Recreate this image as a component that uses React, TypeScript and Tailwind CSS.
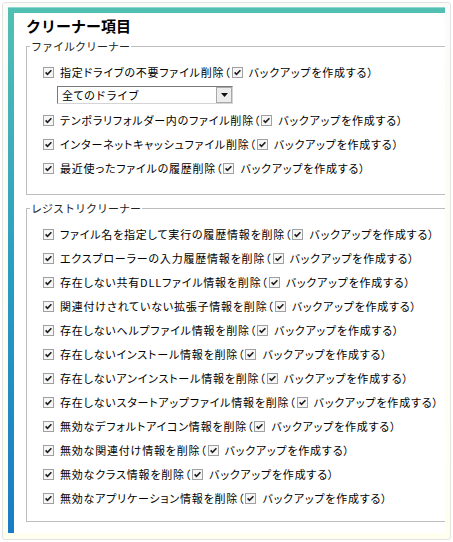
const fileItems = [
  "テンポラリフォルダー内のファイル削除",
  "インターネットキャッシュファイル削除",
  "最近使ったファイルの履歴削除",
]

const registryItems = [
  "ファイル名を指定して実行の履歴情報を削除",
  "エクスプローラーの入力履歴情報を削除",
  "存在しない共有DLLファイル情報を削除",
  "関連付けされていない拡張子情報を削除",
  "存在しないヘルプファイル情報を削除",
  "存在しないインストール情報を削除",
  "存在しないアンインストール情報を削除",
  "存在しないスタートアップファイル情報を削除",
  "無効なデフォルトアイコン情報を削除",
  "無効な関連付け情報を削除",
  "無効なクラス情報を削除",
  "無効なアプリケーション情報を削除",
]

function Check() {
  return (
    <svg width="11" height="11" viewBox="0 0 11 11" className="shrink-0">
      <rect x="0.5" y="0.5" width="10" height="10" fill="#f6f6f6" stroke="#a0a0a0" />
      <path d="M2.6 5.4 L4.5 7.4 L8.4 3.2" fill="none" stroke="#1e1e1e" strokeWidth="1.6" />
    </svg>
  )
}

function Row({ label }: { label: string }) {
  return (
    <div className="flex items-center h-6 whitespace-nowrap [font-feature-settings:'palt'] tracking-[0.8px]">
      <Check />
      <span className="ml-[6px]">{label}（</span>
      <span className="ml-[1px] flex items-center">
        <Check />
      </span>
      <span className="ml-[6px]">バックアップを作成する）</span>
    </div>
  )
}

function Group({ title, children, className }: { title: string; children: React.ReactNode; className?: string }) {
  return (
    <fieldset className={"w-[440px] border border-[#bdbdbd] " + (className ?? "")}>
      <legend className="ml-[3px] px-[1px] text-[11px] leading-[14px] text-[#222]">{title}</legend>
      {children}
    </fieldset>
  )
}

export default function App() {
  return (
    <div className="w-[453px] h-[542px] p-[2px] bg-white font-['Noto_Sans_CJK_JP',sans-serif] text-[11px] text-black">
      <div className="h-full rounded-[3px] border border-[#e3e3e3] bg-linear-to-b from-[#fbfbf8] to-[#fffff0] pt-[4px] pl-[5px]">
        <div className="flex flex-col w-[437px] h-[526px]">
          {/* top accent */}
          <div className="h-[6px] bg-[#52bfb3] border-t border-[#8fd8cf]" />
          <div className="flex flex-1 min-h-0">
            <div className="w-[6px] bg-linear-to-b from-[#52bfb3] via-[#2a9cc2] to-[#1a7bc6]" />
            <div className="flex-1 bg-white overflow-hidden pl-[12px]">
              <h1 className="pt-[4px] text-[15px] leading-[18px] font-bold">クリーナー項目</h1>

              <Group title="ファイルクリーナー" className="mt-[4px] pb-[14px]">
                <div className="pt-[7px] pl-[16px]">
                  <Row label="指定ドライブの不要ファイル削除" />
                  <div className="mt-[2px] ml-[14px] w-[176px] h-[18px] flex items-center border border-t-[#7a7a7a] border-l-[#7a7a7a] border-r-[#d4d4d4] border-b-[#d4d4d4] bg-white">
                    <span className="flex-1 pl-[4px] leading-[16px]">全てのドライブ</span>
                    <div className="w-[16px] h-[16px] flex items-center justify-center bg-[#ececec] border border-[#a8a8a8]">
                      <svg width="7" height="4" viewBox="0 0 7 4">
                        <path d="M0 0 H7 L3.5 4 Z" fill="#111" />
                      </svg>
                    </div>
                  </div>
                  <div className="mt-[4px]">
                    {fileItems.map((t) => (
                      <Row key={t} label={t} />
                    ))}
                  </div>
                </div>
              </Group>

              <Group title="レジストリクリーナー" className="mt-[6px] pb-[11px]">
                <div className="pt-[7px] pl-[16px]">
                  {registryItems.map((t) => (
                    <Row key={t} label={t} />
                  ))}
                </div>
              </Group>
            </div>
          </div>
        </div>
      </div>
    </div>
  )
}
